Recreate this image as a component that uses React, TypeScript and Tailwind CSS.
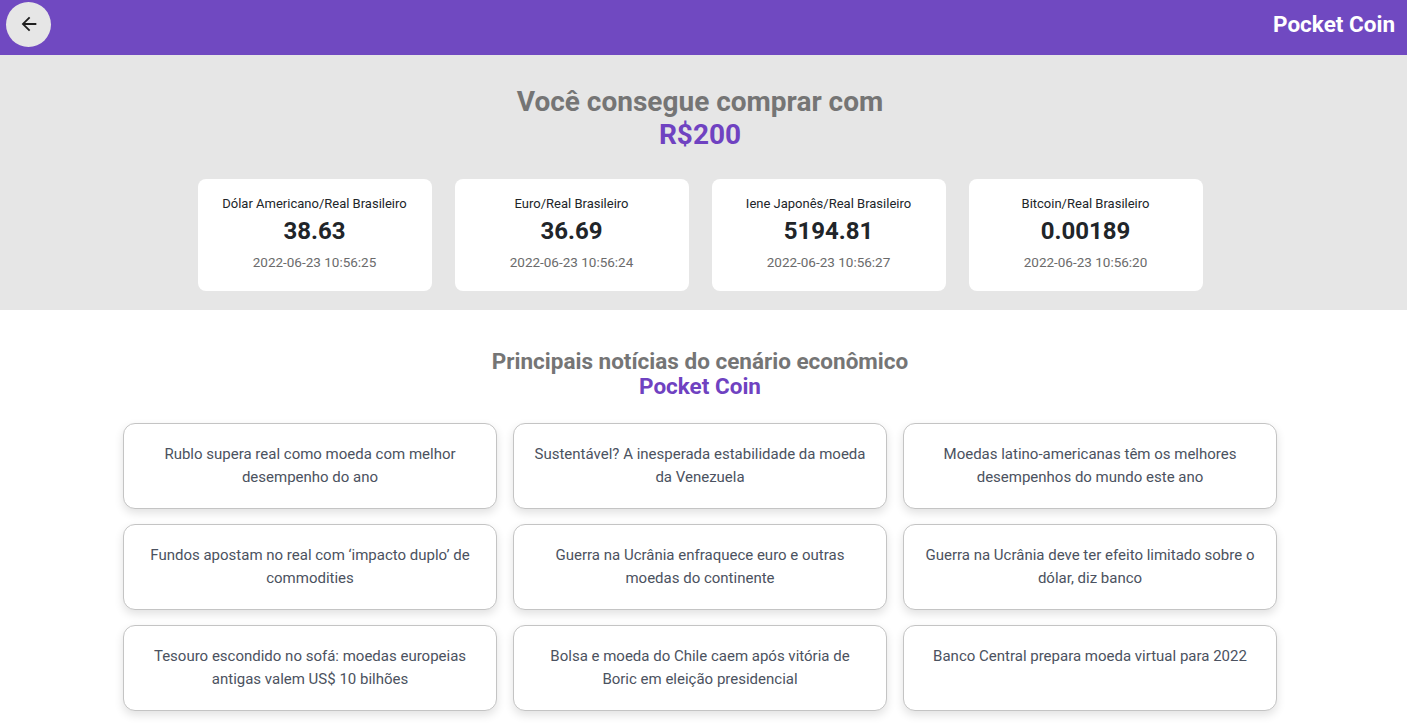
import React from 'react';

const rates = [
  { name: 'Dólar Americano/Real Brasileiro', value: '38.63', date: '2022-06-23 10:56:25' },
  { name: 'Euro/Real Brasileiro', value: '36.69', date: '2022-06-23 10:56:24' },
  { name: 'Iene Japonês/Real Brasileiro', value: '5194.81', date: '2022-06-23 10:56:27' },
  { name: 'Bitcoin/Real Brasileiro', value: '0.00189', date: '2022-06-23 10:56:20' },
];

const news = [
  'Rublo supera real como moeda com melhor desempenho do ano',
  'Sustentável? A inesperada estabilidade da moeda da Venezuela',
  'Moedas latino-americanas têm os melhores desempenhos do mundo este ano',
  'Fundos apostam no real com ‘impacto duplo’ de commodities',
  'Guerra na Ucrânia enfraquece euro e outras moedas do continente',
  'Guerra na Ucrânia deve ter efeito limitado sobre o dólar, diz banco',
  'Tesouro escondido no sofá: moedas europeias antigas valem US$ 10 bilhões',
  'Bolsa e moeda do Chile caem após vitória de Boric em eleição presidencial',
  'Banco Central prepara moeda virtual para 2022',
];

const App = () => {
  return (
    <div className="min-h-screen bg-white font-['Roboto',sans-serif]">
      <header className="h-[55px] bg-[#7049c1] flex items-center justify-between pl-[6px] pr-[12px]">
        <button className="w-[45px] h-[45px] -mt-[7px] rounded-full bg-[#e6e6e6] flex items-center justify-center">
          <svg viewBox="0 0 24 24" className="w-[22px] h-[22px] fill-[#1f1f1f]">
            <path d="M20 11H7.83l5.59-5.59L12 4l-8 8 8 8 1.41-1.41L7.83 13H20v-2z" />
          </svg>
        </button>
        <h1 className="text-white text-[22.5px] font-bold -mt-[5px]">Pocket Coin</h1>
      </header>

      <section className="bg-[#e6e6e6] h-[255px] pt-[30px] pr-[7px]">
        <h2 className="text-center text-[28px] leading-[33px] font-bold text-[#757575]">
          Você consegue comprar com
          <br />
          <span className="text-[#6f42c1]">R$200</span>
        </h2>
        <div className="flex justify-center gap-[23px] mt-[28px]">
          {rates.map((rate) => (
            <div
              key={rate.name}
              className="w-[234px] h-[112px] bg-white rounded-[8px] flex flex-col items-center pt-[17px]"
            >
              <p className="text-[13px] leading-[16px] text-[#212529]">{rate.name}</p>
              <p className="text-[24px] leading-[28px] font-bold text-[#212529] mt-[5px]">{rate.value}</p>
              <p className="text-[13.5px] leading-[16px] text-[#6b6b6b] mt-[9px]">{rate.date}</p>
            </div>
          ))}
        </div>
      </section>

      <section className="pt-[39px] pr-[7px]">
        <h2 className="text-center text-[22.5px] leading-[25px] font-bold text-[#757575]">
          Principais notícias do cenário econômico
          <br />
          <span className="text-[#6f42c1]">Pocket Coin</span>
        </h2>
        <div className="grid grid-cols-3 gap-x-4 gap-y-[15px] w-[1154px] mx-auto mt-[24px] pb-6">
          {news.map((item) => (
            <div
              key={item}
              className="h-[86px] bg-white border border-[#c4c4c4] rounded-[12px] shadow-[0_4px_10px_rgba(0,0,0,0.12)] px-[19px] pt-[19px] text-center text-[15px] leading-[23px] text-[#4b5260]"
            >
              {item}
            </div>
          ))}
        </div>
      </section>
    </div>
  );
};

export default App;
